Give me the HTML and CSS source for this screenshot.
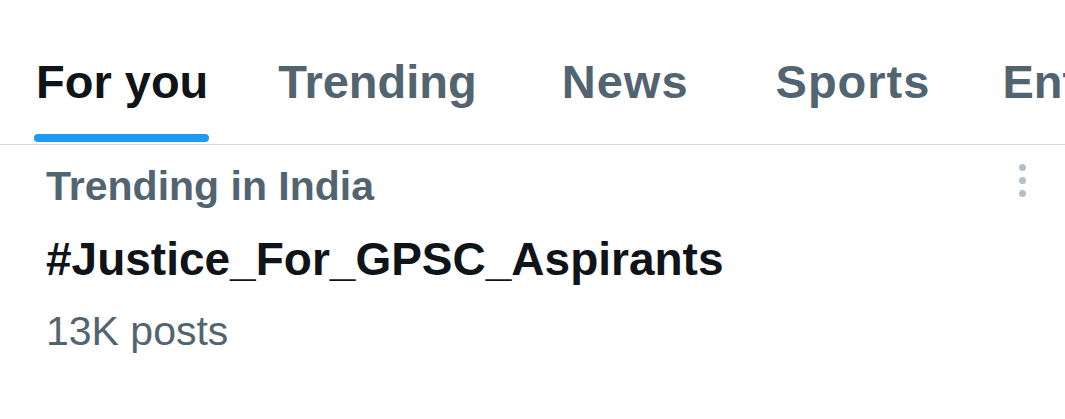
FILE: index.html
```html
<!DOCTYPE html>
<html>
<head>
<meta charset="utf-8">
<link rel="stylesheet" href="styles.css">
</head>
<body>
<div class="page">
  <nav class="tabs">
    <div class="tab active"><span class="label">For you</span><span class="bar"></span></div>
    <div class="tab tab-trending"><span class="label">Trending</span></div>
    <div class="tab tab-news"><span class="label">News</span></div>
    <div class="tab tab-sports"><span class="label">Sports</span></div>
    <div class="tab tab-ent"><span class="label">Entertainment</span></div>
  </nav>
  <section class="trend">
    <div class="trend-text">
      <div class="context">Trending in India</div>
      <div class="tag">#Justice_For_GPSC_Aspirants</div>
      <div class="count">13K posts</div>
    </div>
    <div class="more"><span></span><span></span><span></span></div>
  </section>
</div>
</body>
</html>
```
FILE: styles.css
```css
html, body {
  margin: 0;
  padding: 0;
  background: #ffffff;
}
.page {
  width: 1065px;
  height: 419px;
  overflow: hidden;
  font-family: "Liberation Sans", Arial, sans-serif;
}
.tabs {
  display: flex;
  padding-left: 36px;
  height: 144px;
  border-bottom: 1px solid #d9dadc;
  white-space: nowrap;
}
.tab {
  position: relative;
  flex: none;
  padding-top: 54px;
  font-size: 47px;
  font-weight: 700;
  color: #536471;
  line-height: 56px;
}
.tab.active {
  color: #0f1419;
}
.tab-trending { margin-left: 70px; }
.tab-news { margin-left: 85px; letter-spacing: 1px; }
.tab-sports { margin-left: 87px; letter-spacing: 1px; }
.tab-ent { margin-left: 72px; }
.bar {
  position: absolute;
  left: -2px;
  right: -1px;
  bottom: 2px;
  height: 8px;
  border-radius: 4px;
  background: #1d9bf0;
}
.trend {
  display: flex;
  justify-content: space-between;
  padding: 0 36px 0 46px;
}
.trend-text {
  display: flex;
  flex-direction: column;
}
.context {
  margin-top: 17px;
  font-size: 41px;
  font-weight: 700;
  color: #536471;
  line-height: 48px;
}
.tag {
  margin-top: 23px;
  font-size: 46px;
  font-weight: 700;
  color: #0f1419;
  line-height: 52px;
}
.count {
  margin-top: 22px;
  font-size: 41px;
  color: #536471;
  line-height: 48px;
}
.more {
  display: flex;
  flex-direction: column;
  gap: 6px;
  padding-top: 19px;
  margin-right: 3px;
}
.more span {
  width: 7px;
  height: 7px;
  border-radius: 50%;
  background: #b4c0c9;
}
```
